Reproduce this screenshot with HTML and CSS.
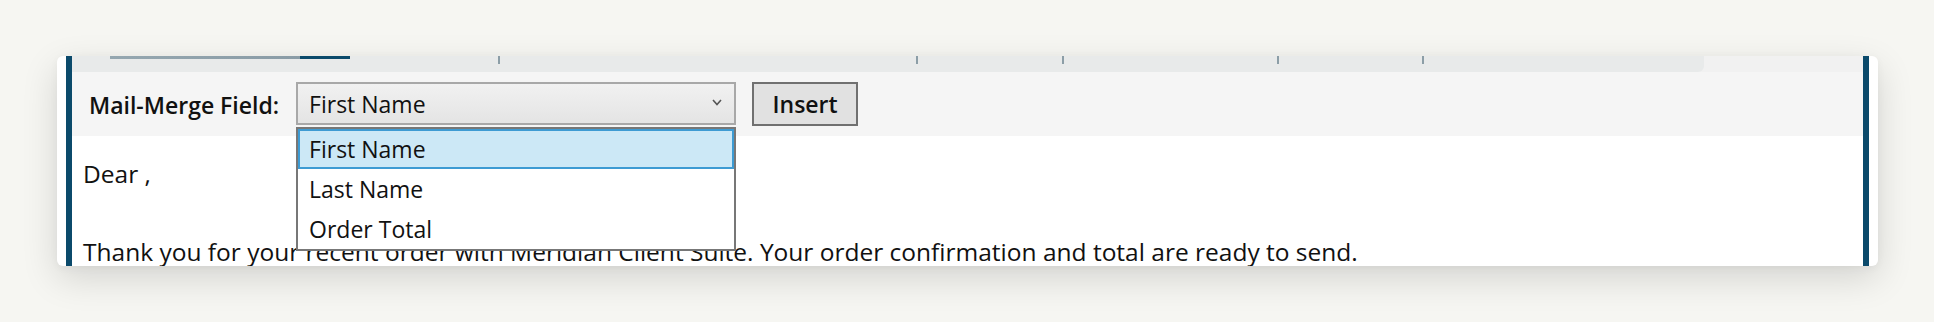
FILE: index.html
```html
<!DOCTYPE html>
<html lang="en">
<head>
<meta charset="utf-8">
<title>Mail-Merge</title>
<link rel="stylesheet" href="styles.css">
</head>
<body>
<div class="card">
  <div class="editor">
    <div class="strip">
      <div class="tabs">
        <div class="seg seg1"><span class="line-grey"></span><span class="line-active"></span></div>
        <span class="tick"></span>
        <div class="seg seg2"></div>
        <span class="tick"></span>
        <div class="seg seg3"></div>
        <span class="tick"></span>
        <div class="seg seg4"></div>
        <span class="tick"></span>
        <div class="seg seg5"></div>
        <span class="tick"></span>
      </div>
    </div>
    <div class="toolbar">
      <span class="label">Mail-Merge Field:</span>
      <div class="combo">
        <div class="select">
          <span>First Name</span>
          <svg class="chev" width="10" height="7" viewBox="0 0 10 7"><polyline points="1,1 5,5.5 9,1" fill="none" stroke="#555" stroke-width="1.6"/></svg>
        </div>
        <ul class="list">
          <li class="item selected">First Name</li>
          <li class="item">Last Name</li>
          <li class="item">Order Total</li>
        </ul>
      </div>
      <button class="insert">Insert</button>
    </div>
    <div class="content">
      <p>Dear ,</p>
      <p>&nbsp;</p>
      <p>Thank you for your recent order with Meridian Client Suite. Your order confirmation and total are ready to send.</p>
    </div>
  </div>
</div>
</body>
</html>
```

FILE: styles.css
```css
html, body {
  margin: 0;
  padding: 0;
}
body {
  background: #f6f6f2;
  padding: 56px 56px 0 57px;
  height: 322px;
  box-sizing: border-box;
  overflow: hidden;
  font-family: "Open Sans", "Noto Sans", sans-serif;
  color: #111;
}
.card {
  width: 1821px;
  height: 210px;
  box-sizing: border-box;
  padding: 0 9px;
  background: #fff;
  border-radius: 6px;
  overflow: hidden;
  box-shadow: 0 12px 36px rgba(0, 0, 0, 0.14), 0 2px 8px rgba(0, 0, 0, 0.04);
}
.editor {
  height: 100%;
  border-left: 6px solid #0b4a6b;
  border-right: 6px solid #0b4a6b;
  background: #fff;
  display: flex;
  flex-direction: column;
}
.strip {
  height: 16px;
  background: #f1f1f1;
  display: flex;
  flex-shrink: 0;
}
.tabs {
  width: 1632px;
  height: 16px;
  background: #e8eaea;
  border-bottom-right-radius: 6px;
  display: flex;
  align-items: flex-start;
}
.seg { height: 8px; }
.seg1 { width: 426px; display: flex; }
.seg2 { width: 416px; }
.seg3 { width: 144px; }
.seg4 { width: 213px; }
.seg5 { width: 143px; }
.line-grey {
  margin-left: 38px;
  width: 190px;
  height: 3px;
  background: linear-gradient(to right, #95a7b0, #8a9ca6);
}
.line-active {
  width: 50px;
  height: 3px;
  background: #0b4a6b;
}
.tick {
  width: 2px;
  height: 8px;
  background: #8c9ea7;
}
.toolbar {
  height: 64px;
  flex-shrink: 0;
  background: #f5f5f5;
  display: flex;
  align-items: center;
  padding-left: 17px;
  box-sizing: border-box;
}
.label {
  font-weight: 600;
  font-size: 23px;
  margin-right: 17px;
  margin-top: 2px;
}
.combo {
  position: relative;
  width: 440px;
  height: 43px;
  margin-top: -1px;
}
.select {
  box-sizing: border-box;
  height: 43px;
  border: 2px solid #a8a8a8;
  background: linear-gradient(#f1f1f1, #e4e4e4);
  display: flex;
  align-items: center;
  justify-content: space-between;
  padding: 0 12px 0 11px;
  font-size: 23px;
}
.chev { margin-top: -3px; }
.list {
  position: absolute;
  left: 0;
  top: 45px;
  width: 440px;
  box-sizing: border-box;
  margin: 0;
  padding: 0;
  list-style: none;
  background: #fff;
  border: 2px solid #777;
  z-index: 5;
}
.item {
  height: 40px;
  box-sizing: border-box;
  padding-left: 11px;
  display: flex;
  align-items: center;
  font-size: 23px;
}
.item.selected {
  background: #cce8f6;
  border: 2px solid #3d9bd3;
  padding-left: 9px;
}
.insert {
  margin-left: 16px;
  width: 106px;
  height: 44px;
  box-sizing: border-box;
  border: 2px solid #707070;
  background: #e1e1e1;
  font-family: inherit;
  font-size: 23px;
  font-weight: 600;
  color: #111;
  padding: 0;
}
.content {
  padding: 18px 0 0 11px;
  font-size: 24.5px;
  line-height: 39px;
}
.content p {
  margin: 0;
  white-space: nowrap;
}
```
